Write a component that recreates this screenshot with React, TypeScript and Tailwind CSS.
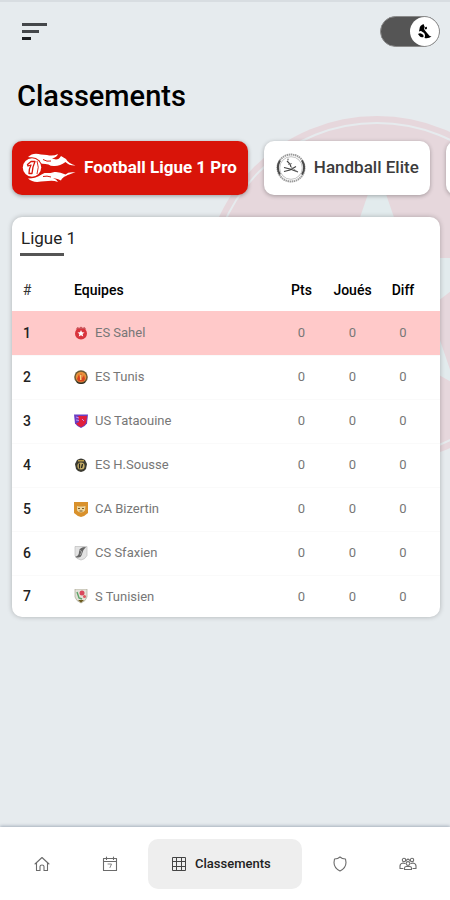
import React, { useState } from "react";

type Team = { name: string; badge: React.ReactNode };

const teams: Team[] = [
  {
    name: "ES Sahel",
    badge: (
      <g>
        <circle cx="7" cy="7.5" r="6" fill="#d8343c" />
        <path d="M2 3 3.500 1 5.500 2 7 .5 8.500 2 10.500 1 12 3" fill="#c9545a" />
        <path d="M7 4l1 2.200 2.500.2-1.900 1.600.6 2.500L7 9.200l-2.200 1.300.6-2.500-1.900-1.600L6 6.200z" fill="#fff" />
      </g>
    ),
  },
  {
    name: "ES Tunis",
    badge: (
      <g>
        <circle cx="7" cy="7" r="6.800" fill="#6b5a35" />
        <circle cx="7" cy="7" r="5.300" fill="#e8923a" />
        <path d="M3 9 5 4l1 4 1-5 1.500 5L10 5l1 4-1.500 2.500h-5z" fill="#d8431f" />
        <path d="M6 5h1.500v5H6z" fill="#f8d27a" />
        <path d="M2 11q5 4 10 0l-1 2q-4 2-8 0z" fill="#2c2a20" />
      </g>
    ),
  },
  {
    name: "US Tataouine",
    badge: (
      <g>
        <path d="M0 .5h14l-1 9q-2 3-6 4.500Q3 12.500 1 9.500z" fill="#6a3fc4" />
        <path d="M4 2h9l-1 7q-2 3-5 4-3-1-5-3.500L5 8z" fill="#e01e3c" />
        <path d="M2 3l3 1M2 6l3 .5M8 5l2 2" stroke="#c98be6" />
      </g>
    ),
  },
  {
    name: "ES H.Sousse",
    badge: (
      <g>
        <path d="M3 2Q7-1 11 2l2 4-1 5q-2 3-5 3t-5-3L1 6z" fill="#3b3a30" />
        <path d="M4 2h6v1.500H4z" fill="#b99b4a" />
        <circle cx="7" cy="8" r="3.600" fill="#cdb36a" />
        <path d="M5.500 5.500v5M8.500 6l-1 4" stroke="#25251f" strokeWidth="1.300" />
      </g>
    ),
  },
  {
    name: "CA Bizertin",
    badge: (
      <g>
        <path d="M0 0h14v11q-3 3-7 4-4-1-7-4z" fill="#d9912c" />
        <path d="M3 4l2 .5h4L11.500 4 11 8.500q-1.500 2-4 2t-4-2z" fill="#ecd6a0" />
        <path d="M4 6.500h2M8 6.500h2M5.500 9h3" stroke="#7a5a28" />
      </g>
    ),
  },
  {
    name: "CS Sfaxien",
    badge: (
      <g>
        <path d="M1 .5h12v9q-2 4-6 4.500Q2 13 1 9.500z" fill="#e3e3e3" stroke="#bdbdbd" strokeWidth=".7" />
        <path d="M12 1Q5 1 5 6q0 4-4 5 6 2 7-3 .5-4 4-7z" fill="#666" />
        <path d="M5 3.500 8 6 6 9" stroke="#a8a8a8" fill="none" />
      </g>
    ),
  },
  {
    name: "S Tunisien",
    badge: (
      <g>
        <path d="M1 0h12v8q-1 4-6 6-5-2-6-6z" fill="#e4e2d8" stroke="#aaa797" strokeWidth=".7" />
        <circle cx="8" cy="4" r="2.500" fill="#d9485c" />
        <path d="M3 3l2 6 3 1" stroke="#5da36a" strokeWidth="1.400" fill="none" />
        <circle cx="10.500" cy="7.500" r="1.500" fill="#dd5b63" />
        <path d="M4 11h6l-3 2.800z" fill="#6b5a1d" />
      </g>
    ),
  },
];

function FlameBall() {
  return (
    <svg viewBox="0 0 54 30" className="h-[30px] w-[54px]" fill="#fff" aria-hidden="true">
      <path d="M6 4Q11-1 19 1.500L25 2q6 1.500 11-1-1 3-6 4.500l4 1q3 0 5-3.500l5 3q2 4 9.500 6.500-6 .5-10-3.500-6 4.500-12 4-3 0-5-1.500l-3-.5-6-.5Q14 5 6 4z" />
      <path d="M6 25.500Q11 30 19 28.500L26 28q5-1 10 1-1-2.500-5-4 5 .5 8 2.500 1-3 5-4.500 3-2 9.500-3.500-7-1-10 2-6-3-11-2.500l-4 1-6 0-3 1.500Q14 25.500 6 25.500z" />
      <circle cx="10" cy="14.500" r="10.200" fill="#d91409" />
      <circle cx="10" cy="14.500" r="9.200" />
      <path
        d="M5.500 11.500 9 8.500h4q-2.500 5-3 12H7q0-5 2-8.500l-3 1z"
        fill="#fff"
        stroke="#d91409"
        strokeWidth="1.300"
        strokeLinejoin="round"
      />
      <path d="M15 8q2.500 6 0 13" fill="none" stroke="#d91409" strokeWidth=".9" />
      <path d="M21 6.500q4 2.500 8 1.500M21 23.500q4-1 8 .5" stroke="#d91409" strokeWidth="1" fill="none" />
    </svg>
  );
}

function HandballSeal() {
  return (
    <svg viewBox="0 0 30 30" className="size-[30px]" fill="none" aria-hidden="true">
      <circle cx="15" cy="15" r="13.500" stroke="#9a9a9a" strokeWidth="2" strokeDasharray="1.500 .6" />
      <path d="M4 7.500a13.500 13.500 0 0 0 0 14M26 7.500a13.500 13.500 0 0 1 0 14" stroke="#4a4a4a" strokeWidth="2" />
      <circle cx="15" cy="15" r="11.300" stroke="#999" strokeWidth=".6" />
      <path d="M8 14.500l6 1.500 8 3M8 18.500l6-1.500 6-3.500M11 8l3 3 1 3" stroke="#444" strokeWidth="1.200" />
      <path d="M15 14l6 4.500M12 11.500l4-1" stroke="#777" strokeWidth=".8" />
      <circle cx="12" cy="6.500" r="1" fill="#999" />
    </svg>
  );
}

function ClubWatermark() {
  return (
    <svg viewBox="0 0 348 348" className="absolute top-[114px] -right-[101px] size-[348px]" aria-hidden="true">
      <circle cx="174" cy="174" r="174" fill="#e6d7dc" />
      <circle cx="174" cy="174" r="167" fill="none" stroke="#e6ebee" strokeWidth="2" />
      <path
        d="M174 52 205 142 291 142 226 192 252 268 174 224 96 268 122 192 57 142 143 142z"
        fill="#e2ebed"
      />
    </svg>
  );
}

const line = { fill: "none", stroke: "#6b6b6b", strokeWidth: 1.1, strokeLinejoin: "round", strokeLinecap: "round" } as const;

function HomeIcon() {
  return (
    <svg viewBox="0 0 16 16" className="size-4" {...line} aria-hidden="true">
      <path d="M1 8 8 1.500 15 8M2.500 7v7.500H6v-4q0-1.500 2-1.500t2 1.500v4h3.500V7" />
    </svg>
  );
}

function CalendarIcon() {
  return (
    <svg viewBox="0 0 16 16" className="size-4" {...line} aria-hidden="true">
      <path d="M1.500 2.500h13v12h-13zM1.500 5.500h13M4.500 1v2.500M11.500 1v2.500" />
      <path d="M6 8h3.500L8 11.500" strokeWidth=".8" />
    </svg>
  );
}

function ShieldIcon() {
  return (
    <svg viewBox="0 0 16 16" className="size-4" {...line} aria-hidden="true">
      <path d="M8 1Q6 3 2.500 3L2 6.500Q2 12 8 15q6-3 6-8.500L13.500 3Q10 3 8 1z" />
    </svg>
  );
}

function PeopleIcon() {
  return (
    <svg viewBox="0 0 18 16" className="h-4 w-[18px]" {...line} aria-hidden="true">
      <circle cx="5" cy="4" r="1.700" />
      <circle cx="13" cy="4" r="1.700" />
      <circle cx="9" cy="7.500" r="1.900" />
      <path d="M1 12.500V10q0-2.500 3-3l2 .5M17 12.500V10q0-2.500-3-3l-2 .5M1 12.500h3M17 12.500h-3M5.500 13.500V12q0-1.500 2-1.500h3q2 0 2 1.500v1.500zM7 4.500 9 3l2 1.500" />
    </svg>
  );
}

function GridIcon() {
  return (
    <svg viewBox="0 0 14 14" className="size-[14px]" fill="none" stroke="#444" aria-hidden="true">
      <path d="M.5.5h13v13H.5zM4.500 0v14M9.500 0v14M0 4.500h14M0 9.500h14" />
    </svg>
  );
}

export default function App() {
  const [night, setNight] = useState(true);

  return (
    <div className="relative flex min-h-screen flex-col overflow-hidden border-t-2 border-[#d8dde1] bg-[#e6ebee] font-['Roboto',sans-serif] text-black">
      <ClubWatermark />

      <header className="relative flex items-center justify-between pt-[14px] pr-[10px] pl-[22px]">
        <button type="button" aria-label="Menu" className="flex flex-col gap-1">
          <span className="h-[3px] w-[25px] bg-[#44474a]" />
          <span className="h-[3px] w-[17px] bg-[#44474a]" />
          <span className="h-[3px] w-[9px] bg-[#1c1e20]" />
        </button>
        <label className="relative flex h-[31px] w-[60px] cursor-pointer items-center rounded-full border border-[#8a8a8a] bg-[#555]">
          <input
            type="checkbox"
            aria-label="Mode nuit"
            checked={night}
            onChange={(e) => setNight(e.target.checked)}
            className="peer sr-only"
          />
          <span className="flex size-[29px] items-center justify-center rounded-full bg-white peer-checked:ml-auto">
            <svg viewBox="0 0 14 15" className="h-[15px] w-[14px]" aria-hidden="true">
              <path d="M5.500 0Q1.500 1.500 1.500 5L1 7.500q2-1 3.500.5 2 .5 2.500 3 0 2-.5 3 4 1 7-1.500-2.500-.5-4-3L7 6.500Q5.500 5 6.500 2.500z" />
              <path d="M0 10q2-1.500 4 0 2 .5 1.500 3Q3 14 1.500 12z" />
              <path d="M6.500 2.500 8 3.500 9 2.500 9 4.500 8 5.500 7 5z" />
            </svg>
          </span>
        </label>
      </header>

      <main className="relative flex flex-1 flex-col">
        <h1 className="mt-8 pl-[17px] text-[29px] leading-[34px] font-medium">Classements</h1>

        <div className="flex gap-4 overflow-hidden px-3 pt-7 pb-[22px]">
          <button
            type="button"
            className="flex h-[54px] shrink-0 items-center gap-2 rounded-[10px] bg-[#d91409] pr-[11px] pl-[10px] text-[17px] font-bold text-white shadow-[0_1px_4px_rgba(0,0,0,0.35)]"
          >
            <FlameBall />
            Football Ligue 1 Pro
          </button>
          <button
            type="button"
            className="flex h-[54px] shrink-0 items-center gap-2 rounded-[10px] bg-white pr-[11px] pl-3 text-[17px] font-medium text-[#3c3c3c] shadow-[0_1px_4px_rgba(0,0,0,0.3)]"
          >
            <HandballSeal />
            Handball Elite
          </button>
          <button
            type="button"
            aria-label="Volleyball"
            className="h-[54px] w-40 shrink-0 rounded-[10px] bg-white shadow-[0_1px_4px_rgba(0,0,0,0.3)]"
          />
        </div>

        <section className="mr-[10px] ml-3 overflow-hidden rounded-[10px] bg-white shadow-[0_0_5px_rgba(0,0,0,0.25)]">
          <h2 className="px-[9px] pt-[10px] text-[17px] leading-[22px] text-[#222]">Ligue 1</h2>
          <div className="mt-1 ml-2 h-[3px] w-11 bg-[#555]" />
          <table className="mt-[11px] w-full table-fixed text-center text-[13px]">
            <colgroup>
              <col className="w-[30px]" />
              <col />
              <col className="w-[51px]" />
              <col className="w-[51px]" />
              <col className="w-[62px]" />
            </colgroup>
            <thead>
              <tr className="h-11 text-[14px]">
                <th scope="col" className="pt-[3px] font-normal text-[#333]">#</th>
                <th scope="col" className="pt-[3px] pl-8 text-left font-medium">Equipes</th>
                <th scope="col" className="pt-[3px] font-medium">Pts</th>
                <th scope="col" className="pt-[3px] font-medium">Joués</th>
                <th scope="col" className="pt-[3px] pr-3 font-medium">Diff</th>
              </tr>
            </thead>
            <tbody>
              {teams.map((team, i) => (
                <tr
                  key={team.name}
                  className="h-11 border-t border-[#fafafa] text-[#777] first:border-[#ffc9c9] first:bg-[#ffc9c9] last:h-[42px]"
                >
                  <td className="text-[14px] font-medium text-[#222]">{i + 1}</td>
                  <td className="pl-8">
                    <span className="flex items-center gap-[7px]">
                      <svg viewBox="0 0 14 15" className="h-[15px] w-[14px] shrink-0" aria-hidden="true">
                        {team.badge}
                      </svg>
                      {team.name}
                    </span>
                  </td>
                  <td>0</td>
                  <td>0</td>
                  <td className="pr-3">0</td>
                </tr>
              ))}
            </tbody>
          </table>
        </section>
      </main>

      <nav className="relative flex h-[73px] items-center bg-white px-2 shadow-[0_-1px_3px_rgba(100,115,140,0.5)]">
        <a href="#accueil" aria-label="Accueil" className="flex h-full flex-1 items-center justify-center">
          <HomeIcon />
        </a>
        <a href="#calendrier" aria-label="Calendrier" className="flex h-full flex-1 items-center justify-center">
          <CalendarIcon />
        </a>
        <a
          href="#classements"
          aria-current="page"
          className="mx-1 flex h-[50px] w-[154px] items-center gap-[9px] rounded-[10px] bg-[#eee] pl-6 text-[13px] font-medium text-[#222]"
        >
          <GridIcon />
          Classements
        </a>
        <a href="#clubs" aria-label="Clubs" className="flex h-full flex-1 items-center justify-center">
          <ShieldIcon />
        </a>
        <a href="#communaute" aria-label="Communauté" className="flex h-full flex-1 items-center justify-center">
          <PeopleIcon />
        </a>
      </nav>
    </div>
  );
}
